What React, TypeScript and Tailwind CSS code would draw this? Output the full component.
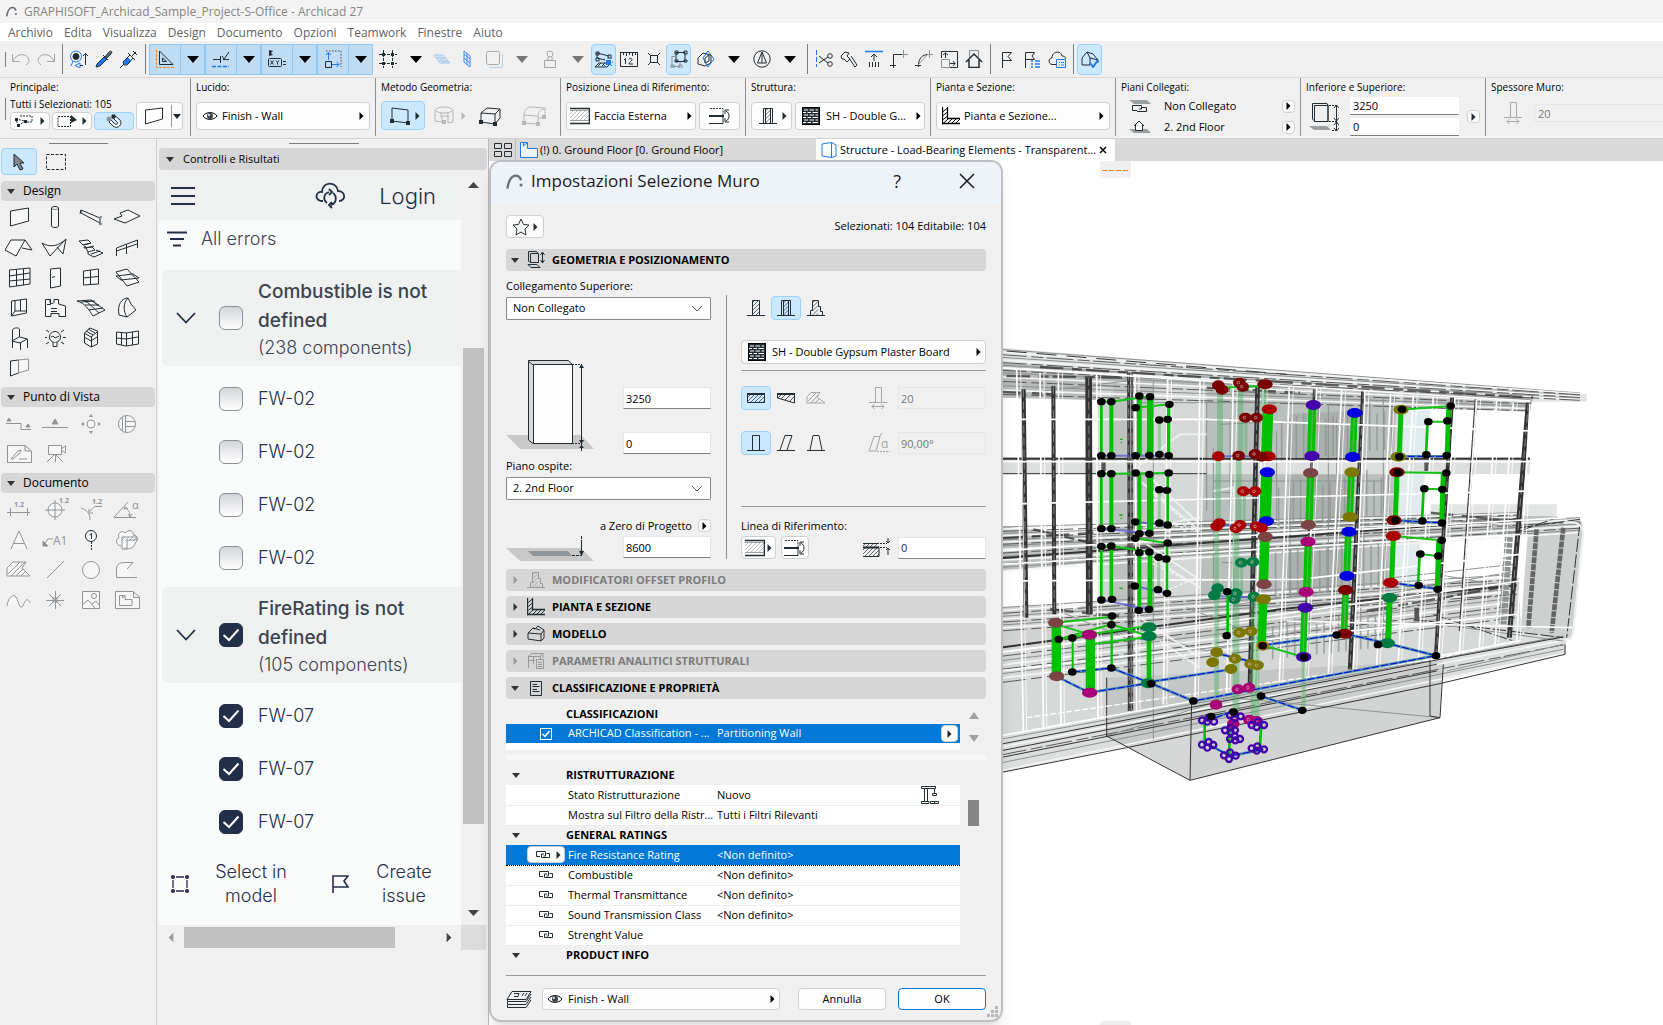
import React from 'react';
import clsx from 'clsx';

type Kids = { children?: React.ReactNode; className?: string };

type IconProps = Kids & { w?: number; h?: number; box?: string };

const Icon = ({ w = 18, h = 18, box, className, children }: IconProps) => (
    <svg
        width={w}
        height={h}
        viewBox={box || `0 0 ${w} ${h}`}
        fill="none"
        stroke="currentColor"
        strokeWidth="1"
        className={clsx('shrink-0', className)}
        aria-hidden="true"
    >
        {children}
    </svg>
);

const BLUE = '#1f78f0';

const Right = ({ className }: { className?: string }) => (
    <svg width="5" height="8" viewBox="0 0 5 8" className={clsx('shrink-0', className)} aria-hidden="true">
        <path d="M0.500 0 4.500 4 0.500 8Z" fill="currentColor" />
    </svg>
);

const Down = ({ className, big }: { className?: string; big?: boolean }) => (
    <svg width={big ? 12 : 8} height={big ? 7 : 5} viewBox="0 0 8 5" preserveAspectRatio="none" className={clsx('shrink-0', className)} aria-hidden="true">
        <path d="M0 0H8L4 5Z" fill="currentColor" />
    </svg>
);

const Hatch = ({ x, y, w, h }: { x: number; y: number; w: number; h: number }) => {
    const lines = [];
    for (let i = 3; i < w + h; i += 4) {
        const x1 = Math.max(0, i - h);
        const y1 = Math.min(h, i);
        const x2 = Math.min(w, i);
        const y2 = Math.max(0, i - w);
        lines.push(`M${x + x1} ${y + y1}L${x + x2} ${y + y2}`);
    }
    return <path d={lines.join('')} strokeWidth="0.7" />;
};

/* ---------- shared icons ---------- */

const Logo = ({ size = 16 }: { size?: number }) => (
    <Icon w={size} h={size} box="0 0 16 16" className="text-[#6a7078]">
        <path d="M2 14C3 8 5 3 9 3c3 0 4 2 4.500 4" strokeWidth="2" />
        <circle cx="13.500" cy="11" r="1.300" fill="currentColor" stroke="none" />
    </Icon>
);

const Eye = () => (
    <Icon w={16} h={12}>
        <path d="M1 6C4 1.500 12 1.500 15 6 12 10.500 4 10.500 1 6Z" />
        <circle cx="8" cy="6" r="3" fill="#3b444a" stroke="none" />
        <circle cx="7" cy="5" r="1" fill="#fff" stroke="none" />
    </Icon>
);

const WallFace = () => (
    <Icon w={20} h={18} className="text-[#9a9fa2]">
        <Hatch x={0} y={4} w={20} h={9} />
        <path d="M0 1.500H19.500V16.500H0" stroke="#222c33" strokeWidth="1.500" />
        <path d="M0 3.500H19M0 13.500H19" />
    </Icon>
);

const FlipSide = () => (
    <Icon w={22} h={18}>
        <path d="M1 1.500H14V8" strokeDasharray="2 1" />
        <path d="M0 9H15" strokeWidth="2" />
        <path d="M0 16.500H14V10" />
        <path d="M17 4C21 6 21 12 17 14M16 7V3H20M16 11V15H20" />
    </Icon>
);

const Brick = () => (
    <Icon w={18} h={18}>
        <rect x="0.500" y="0.500" width="17" height="17" fill="#222c33" />
        <path
            d="M2 3H6M7.500 3H12M13.500 3H16M1 5.500H4M5.500 5.500H9M10.500 5.500H16M2 8H6M7.500 8H12M13.500 8H16M1 10.500H4M5.500 10.500H9M10.500 10.500H16M2 13H6M7.500 13H12M13.500 13H16M1 15.500H4M5.500 15.500H9M10.500 15.500H16"
            stroke="#fff"
            strokeWidth="1.200"
        />
    </Icon>
);

const Basic = () => (
    <Icon>
        <Hatch x={5} y={1} w={7} h={15} />
        <path d="M5.500 16.500V1.500H12.500V16.500M0 16.500H18" />
    </Icon>
);

const Composite = () => (
    <Icon>
        <Hatch x={6.500} y={1} w={5} h={15} />
        <path d="M4.500 16.500V1.500H13.500V16.500M6.500 1V16M11.500 1V16M0 16.500H18" />
    </Icon>
);

const Profile = ({ className }: { className?: string }) => (
    <Icon className={className}>
        <Hatch x={5.500} y={1} w={5.500} h={15} />
        <path d="M3.500 16.500V11.500H5.500V1.500H11.500V7.500H13.500V12.500H15.500V16.500M0 16.500H18" />
    </Icon>
);

const Thickness = () => (
    <Icon w={18} h={22} className="text-[#a3a7aa]">
        <path d="M0 15.500H18M6.500 15.500V0.500H12.500V15.500M3 19.500H15M5.500 17 3 19.500 5.500 22M12.500 17 15 19.500 12.500 22" />
    </Icon>
);

const SectionL = () => (
    <Icon>
        <path d="M0.500 0V16.500H18M5.500 0V11.500H18" strokeWidth="1.300" />
        <path d="M0.500 5 5.500 1M0.500 9 5.500 5M0.500 13 5.500 9M0.500 17 6 12M5 17 10 12M9 17 14 12M13 17 18 12" />
    </Icon>
);

const Link = () => (
    <Icon w={14} h={8}>
        <path d="M4 5.500H0.500V0.500H9.500V5H7.500M10.500 2.500H13.500V6.500H5.500V3H8" />
    </Icon>
);

const QuadWall = ({ dots }: { dots?: boolean }) => (
    <Icon w={20} h={18}>
        <path d="M1.500 3 18.500 1V12L1.500 17Z" fill="#fff" />
        {dots && <path d="M0 14H4V18H0ZM16 11H20V15H16Z" fill="currentColor" stroke="none" />}
    </Icon>
);

/* ---------- standard toolbar ---------- */

const Sep = () => (
    <div className="flex h-[30px] w-2 shrink-0 justify-center">
        <div className="w-px bg-[#7d7d7d]" />
    </div>
);

type ToolProps = Kids & { label: string; on?: boolean; dim?: boolean };

const Tool = ({ label, on, dim, children }: ToolProps) => (
    <button
        aria-label={label}
        className={clsx(
            'flex h-[31px] w-[25px] shrink-0 items-center justify-center rounded-sm',
            on && 'border border-[#99d1ff] bg-[#cce8ff]',
            dim && 'text-[#a3a7aa]'
        )}
    >
        {children}
    </button>
);

const DropTool = ({ label, on, dim, children }: ToolProps) => (
    <div className={clsx('flex h-[31px] w-14 shrink-0', on && 'border border-[#8ec8f6] bg-[#c0dcf3]', dim && 'text-[#a3a7aa]')}>
        <button aria-label={label} className="flex w-[30px] items-center justify-center">
            {children}
        </button>
        <button
            aria-label={`${label} menu`}
            className={clsx('flex flex-1 items-center justify-center', dim ? 'text-[#777]' : 'text-black', on && 'border-l border-[#8ec8f6]')}
        >
            <Down big />
        </button>
    </div>
);

const Toolbar = () => (
    <div className="flex h-[37px] items-center border-b border-[#d9d9d9] text-[#222c33]">
        <div className="mr-[2px] ml-[5px] h-[15px] w-px bg-[#7d7d7d]" />
        <Tool label="Annulla azione" dim><Icon><path d="M0.500 4V11.500H8M1 11C4 4 12 3 15.500 7 18 10 17 13 14 15" /></Icon></Tool>
        <Tool label="Ripeti azione" dim><Icon><path d="M17.500 4V11.500H10M17 11C14 4 6 3 2.500 7 0 10 1 13 4 15" /></Icon></Tool>
        <Sep />
        <Tool label="Trova e seleziona">
            <Icon>
                <circle cx="6" cy="6.500" r="5.500" stroke={BLUE} />
                <circle cx="6" cy="6.500" r="3" fill="currentColor" />
                <path d="M3 11 1 16M10 13V18L5 15.500Z" stroke={BLUE} />
                <path d="M10 15.500H13M15.500 4V15M13 6 15.500 3.500 18 6" />
            </Icon>
        </Tool>
        <Tool label="Preleva parametri">
            <Icon>
                <path d="M1 17 2 14 9 7 12 9 5 16Z" fill={BLUE} />
                <path d="M8 5 13 10M10 7 14 2C16 0 18 2 16 4L12 8Z" fill="#5b656b" />
            </Icon>
        </Tool>
        <Tool label="Inietta parametri">
            <Icon>
                <path d="M0 18 4 14" />
                <path d="M4 12 8 8 11 11 8 14H4Z" fill={BLUE} stroke={BLUE} />
                <path d="M3 12 10 5 13 8 7 15H4ZM8 3 15 10M12 6 16 2M13 1 17 5" />
            </Icon>
        </Tool>
        <Sep />
        <DropTool label="Linee guida" on>
            <Icon>
                <path d="M3.500 1V14.500H17ZM6.500 8V11.500H10.500Z" />
                <path d="M0.500 0V17.500H18" stroke="#f5821f" strokeDasharray="3 1" />
            </Icon>
        </DropTool>
        <DropTool label="Aggancio" on>
            <Icon>
                <path d="M1 9.500H8M10 6 12 9 17 2M8.500 6V13M11 9.500H17" />
                <path d="M0 16.500H17" stroke={BLUE} strokeDasharray="4 1.500" strokeWidth="1.500" />
            </Icon>
        </DropTool>
        <DropTool label="Coordinate" on>
            <Icon>
                <rect x="0.500" y="8.500" width="13" height="8" rx="1" />
                <path d="M2.500 10.500 5.500 14.500M5.500 10.500 2.500 14.500M8 10.500 9.500 12.500V14.500M11 10.500 9.500 12.500M15 11.500H18M15 14.500H18" />
                <path d="M1 0 1 6 5 5 3 3 5 1Z" fill="currentColor" stroke="none" />
            </Icon>
        </DropTool>
        <DropTool label="Griglia elementi" on>
            <Icon>
                <path d="M2 1H17V17" stroke="#8b9298" strokeDasharray="1.500 1.500" strokeWidth="2" />
                <path d="M1.500 11.500H7.500V17.500H1.500Z" />
                <path d="M4.500 10V3M2 5 4.500 2.500 7 5M8 14.500H15M12.500 12 15 14.500 12.500 17" stroke={BLUE} />
            </Icon>
        </DropTool>
        <DropTool label="Griglia">
            <Icon>
                <path d="M4.500 0V18M13.500 0V18M0 4.500H18M0 13.500H18" strokeDasharray="3 1" />
                <path d="M3 3H6V6H3ZM12 3H15V6H12ZM3 12H6V15H3ZM12 12H15V15H12Z" fill="currentColor" stroke="none" />
            </Icon>
        </DropTool>
        <Tool label="Piano di lavoro" dim>
            <Icon className="text-[#9fc3ee]"><path d="M1 5H10L17 13H7ZM4 5 11 13M7 5 14 13M3 8H12M5 11H15" /></Icon>
        </Tool>
        <Tool label="Piano verticale">
            <Icon className="text-[#3f86e8]"><path d="M6 1 12 6V17L6 12ZM9 3V15M6 4 12 9M6 8 12 13" /></Icon>
        </Tool>
        <DropTool label="Lucidi" dim>
            <Icon>
                <path d="M4.500 17.500H15C17 17.500 17.500 17 17.500 15V4" stroke="#b5cdec" />
                <rect x="1.500" y="1.500" width="13" height="13" rx="2" />
            </Icon>
        </DropTool>
        <DropTool label="Gravità" dim>
            <Icon><path d="M3.500 10.500H14.500V17.500H3.500ZM7 10V7M11 10V7" /><circle cx="9" cy="4" r="3" /></Icon>
        </DropTool>
        <Tool label="Sospendi gruppi" on>
            <Icon>
                <path d="M2 3 14 6M2 3V8L10 10M1 2H4V5H1ZM13 5H16V8H13ZM1 8H4V11H1Z" />
                <path d="M0 17H12L16 13H4ZM3 16 6 13M7 16 10 13" />
                <path d="M11 10H16V15H11Z" fill={BLUE} stroke="none" />
                <path d="M9 9H10M13 8V9M17 8 16 9M18 12H17M9 16 10 15M17 16 16 15" stroke={BLUE} />
            </Icon>
        </Tool>
        <Tool label="Misura">
            <Icon>
                <path d="M0.500 2V16.500H17.500V2M3.500 2V5M6.500 2V6M9.500 2V5M12.500 2V6M15.500 2V5M0 2.500H18" />
                <path d="M4 10 5.500 8.500V14M9 9.500C9 8 12 8 12 9.500 12 11 9 12 9 14H13" />
            </Icon>
        </Tool>
        <Tool label="Esplodi"><Icon><path d="M5.500 5.500H12.500V12.500H5.500ZM3 3 6 6M15 3 12 6M3 15 6 12M15 15 12 12" /></Icon></Tool>
        <Tool label="Gruppo automatico" on>
            <Icon>
                <path d="M6 2.500H15V11.500H6ZM5 1H8V4H5ZM14 1H17V4H14ZM5 10H8V12H5ZM14 10H17V12H14Z" />
                <path d="M2 6.500H6M2 6V16.500H10V12M1 15H4V18H1ZM9 15H12V18H9Z" stroke="#8b9298" />
            </Icon>
        </Tool>
        <DropTool label="Modello 3D">
            <Icon>
                <path d="M1 8 6 3 14 5V13L8 16 1 14Z" />
                <path d="M6 8 11 1 17 9 11 17Z" stroke={BLUE} />
                <path d="M8 8 12 5V11L8 13Z" />
            </Icon>
        </DropTool>
        <DropTool label="Mostra riferimento">
            <Icon><circle cx="9" cy="9" r="8.200" /><path d="M9 2 13.500 13H4.500ZM9 2V13" /></Icon>
        </DropTool>
        <Sep />
        <Tool label="Dividi">
            <Icon>
                <path d="M1.500 0V17" stroke={BLUE} strokeDasharray="5 2" />
                <path d="M4 6 13 13M4 13 13 7" />
                <circle cx="15" cy="6" r="2.300" /><circle cx="15" cy="14" r="2.300" />
            </Icon>
        </Tool>
        <Tool label="Regola"><Icon><path d="M1 6 5 2 9 3 7 6 10 9 7 12 4 9 2 9ZM9 8 15 17M11 6 17 15 15 17" /></Icon></Tool>
        <Tool label="Allinea">
            <Icon>
                <path d="M0 1.500H18" stroke={BLUE} strokeWidth="1.500" />
                <path d="M9 11V4M6 7 9 4 12 7M4.500 12V17M7.500 12V17M10.500 12V17M13.500 12V17" />
            </Icon>
        </Tool>
        <Tool label="Intersezione"><Icon><path d="M3.500 18V4.500H12M0 15.500H6" /><path d="M12 4.500H18M13.500 0V8" stroke="#8b9298" /></Icon></Tool>
        <Tool label="Raccordo"><Icon><path d="M3.500 17C3 9 7 4.500 13 4.500M0 15.500H6" /><path d="M13 4.500H18M14.500 0V8M3 15 13 4" stroke="#8b9298" /></Icon></Tool>
        <Tool label="Ridimensiona">
            <Icon><path d="M1.500 8V1.500H17.500V17.500H10M5.500 8V3M3 5 5.500 3 8 5M10 13.500H15M13 11 15 13.500 13 16" /><path d="M1.500 9.500H9.500V17.500H1.500Z" stroke="#8b9298" /></Icon>
        </Tool>
        <Tool label="Ritaglia al tetto"><Icon><path d="M4.500 7V0.500H13.500V7" stroke="#8b9298" /><path d="M1 12 9 4 17 12M4 10V17.500H14V10" strokeWidth="1.500" /></Icon></Tool>
        <Sep />
        <Tool label="Problema"><Icon><path d="M4.500 18V2.500H13.500L10 6.500 13.500 10.500H4" /></Icon></Tool>
        <Tool label="Elenco problemi">
            <Icon><path d="M2.500 18V2.500H11.500L9 6 11.500 9.500H2" /><path d="M8 11H10M12 11H17M8 14H10M12 14H17M8 17H10M12 17H17" stroke={BLUE} strokeWidth="1.500" /></Icon>
        </Tool>
        <Tool label="Servizio cloud">
            <Icon>
                <path d="M8 14.500H4C0 14 0 8 4 8 4 1 13 0 14 6 17 6 18 8 17 9" />
                <path d="M8.500 9.500H17.500V17.500H8.500ZM11 12.500H12M13 12.500H16M11 15H12M13 15H16" stroke={BLUE} />
            </Icon>
        </Tool>
        <Sep />
        <Tool label="Controllo modello" on>
            <Icon>
                <path d="M1 8 6 2 12 4 17 10V13M6 2 9 8 17 10M1 8V15H9V8" />
                <path d="M9 13 12 17 17 10" stroke={BLUE} strokeWidth="2" />
            </Icon>
        </Tool>
    </div>
);

/* ---------- info box ---------- */

const InfoCell = ({ label, children, className }: Kids & { label: string }) => (
    <section className={clsx('h-[58px] shrink-0 border-r border-[#8f8f8f] px-[5px] pt-[2px]', className || 'w-[185px]')}>
        <h3 className="text-[10px] leading-[14px]">{label}</h3>
        {children}
    </section>
);

const WhiteButton = ({ children, className, label }: Kids & { label?: string }) => (
    <button aria-label={label} className={clsx('flex items-center rounded border border-[#cfcfcf] bg-[#fdfdfd]', className)}>
        {children}
    </button>
);

const MiniArrow = ({ label }: { label: string }) => (
    <WhiteButton label={label} className="h-[13px] w-[13px] shrink-0 justify-center"><Right /></WhiteButton>
);

const InfoBox = () => (
    <div className="flex h-[61px] items-start overflow-hidden border-b border-[#d0d0d0] text-black">
        <section className="relative h-[58px] w-[191px] shrink-0 border-r border-[#8f8f8f] pt-[2px] pl-[10px]">
            <div className="absolute top-5 left-[5px] h-[22px] w-px bg-[#7d7d7d]" />
            <h3 className="text-[10px] leading-[14px]">Principale:</h3>
            <div className="flex items-end gap-[2px]">
                <div>
                    <p className="pt-[3px] text-[10px] leading-[14px]">Tutti i Selezionati: 105</p>
                    <div className="flex gap-[2px] pt-px text-[#222c33]">
                        <WhiteButton label="Selezione wall" className="h-[18px] w-10 justify-between px-1">
                            <Icon w={18} h={12}><path d="M1 4 10 6 3 11ZM5 1H17V7H9" strokeDasharray="2 1" /><path d="M0 3H3V6H0ZM2 9H5V12H2ZM9 5H12V8H9Z" fill="currentColor" stroke="none" /></Icon>
                            <Right />
                        </WhiteButton>
                        <WhiteButton label="Area di selezione" className="h-[18px] w-10 justify-between px-1">
                            <Icon w={20} h={12}><path d="M1 1.500H13.500V11.500H1Z" strokeDasharray="2 1" /><path d="M14 0V8L20 5Z" fill="currentColor" stroke="none" /></Icon>
                            <Right />
                        </WhiteButton>
                        <button aria-label="Magnete" className="flex h-[18px] w-10 items-center justify-center rounded border border-[#99d1ff] bg-[#cce8ff]">
                            <Icon w={17} h={16}><path d="M8 2 14 7C17 11 12 17 7 13L3 9 5 7 9 11C11 12 13 10 11 9L6 4Z" fill="#fff" /><circle cx="3" cy="6" r="2.500" fill="#8b9298" stroke="none" /><path d="M6 2H9V5H6Z" fill="currentColor" /></Icon>
                        </button>
                    </div>
                </div>
                <div className="flex h-7 w-[47px] rounded border border-[#cfcfcf] bg-[#fdfdfd] text-[#222c33]">
                    <button aria-label="Strumento Muro" className="flex flex-1 items-center justify-center"><QuadWall /></button>
                    <button aria-label="Menu Muro" className="my-[2px] flex w-[11px] items-center justify-center border-l border-[#9a9a9a]"><Down /></button>
                </div>
            </div>
        </section>
        <InfoCell label="Lucido:">
            <WhiteButton className="mt-2 h-7 w-full gap-1 px-[5px] text-[11px]">
                <Eye /> <span className="flex-1 text-left">Finish - Wall</span> <Right />
            </WhiteButton>
        </InfoCell>
        <InfoCell label="Metodo Geometria:">
            <div className="mt-[7px] flex items-center gap-[9px] text-[#222c33]">
                <button aria-label="Muro rettilineo" className="flex h-[29px] w-11 shrink-0 items-center justify-between rounded border border-[#99d1ff] bg-[#cce8ff] px-1 pl-2">
                    <Icon w={20} h={20}><path d="M2 2 18 4V17L2 15Z" /><path d="M0 13H4V17H0ZM16 15H20V19H16Z" fill="currentColor" stroke="none" /></Icon>
                    <Right />
                </button>
                <button aria-label="Muro curvo" className="flex items-center gap-[7px] text-[#b4b8ba]">
                    <Icon w={20} h={20}><path d="M1 4C4 0 16 0 19 4V16L14 17V10H8V16L1 15ZM1 4C3 8 17 8 19 4M7 7V12M14 7V12" /><path d="M8 14H12V18H8Z" fill="currentColor" stroke="none" /></Icon>
                    <Right />
                </button>
                <button aria-label="Muro trapezoidale" className="ml-1">
                    <Icon w={22} h={20}><path d="M2 7 8 2 21 3V12L16 18 2 16ZM2 7 16 8V18M16 8 21 3" /><path d="M0 14H4V18H0ZM14 16H18V20H14Z" fill="currentColor" stroke="none" /></Icon>
                </button>
                <button aria-label="Poligono" className="ml-3 text-[#b4b8ba]">
                    <Icon w={24} h={20}><path d="M2 9C2 4 5 1 10 1L23 2V11M2 9 15 10M2 9V17L16 18V10C16 6 19 3 22 3M16 12H22" /><path d="M0 15H4V19H0ZM14 16H18V20H14ZM20 9H24V13H20Z" fill="currentColor" stroke="none" /></Icon>
                </button>
            </div>
        </InfoCell>
        <InfoCell label="Posizione Linea di Riferimento:">
            <div className="mt-2 flex gap-[3px] text-[#222c33]">
                <WhiteButton className="h-7 w-[130px] gap-1 px-[3px] text-[11px] text-black">
                    <WallFace /> <span className="flex-1 text-left">Faccia Esterna</span> <Right />
                </WhiteButton>
                <WhiteButton label="Capovolgi" className="h-7 w-[41px] justify-center"><FlipSide /></WhiteButton>
            </div>
        </InfoCell>
        <InfoCell label="Struttura:">
            <div className="mt-2 flex gap-[3px] text-[#222c33]">
                <WhiteButton label="Composto" className="h-7 w-[41px] justify-between pr-1 pl-[7px]"><Composite /> <Right /></WhiteButton>
                <WhiteButton className="h-7 w-[130px] gap-[6px] pr-[3px] pl-[6px] text-[11px] text-black">
                    <Brick /> <span className="flex-1 text-left whitespace-nowrap">SH - Double G...</span> <Right />
                </WhiteButton>
            </div>
        </InfoCell>
        <InfoCell label="Pianta e Sezione:">
            <WhiteButton className="mt-2 h-7 w-full gap-1 px-[5px] text-[11px]">
                <SectionL /> <span className="flex-1 text-left">Pianta e Sezione...</span> <Right />
            </WhiteButton>
        </InfoCell>
        <InfoCell label="Piani Collegati:">
            <div className="space-y-[3px] pt-[3px] pl-2 text-[11px] text-black">
                <div className="flex h-[18px] items-center">
                    <Icon w={22} h={12} className="text-[#222c33]"><path d="M0 0H18L22 4H5Z" fill="#9a9fa2" stroke="none" /><path d="M8 10.500H3.500V5.500H12.500V9H10M13 7.500H17.500V11.500H8" /></Icon>
                    <span className="flex-1 pl-[13px]">Non Collegato</span>
                    <MiniArrow label="Piano superiore" />
                </div>
                <div className="flex h-[18px] items-center">
                    <Icon w={22} h={14} className="text-[#222c33]"><path d="M0 9H18L22 13H5Z" fill="#9a9fa2" stroke="none" /><path d="M5 6 10 1 15 6M6.500 5V10.500H13.500V5" fill="#fff" /></Icon>
                    <span className="flex-1 pl-[13px]">2. 2nd Floor</span>
                    <MiniArrow label="Piano di base" />
                </div>
            </div>
        </InfoCell>
        <InfoCell label="Inferiore e Superiore:">
            <div className="flex items-center gap-[8px] pt-[3px] pl-[3px] text-[#222c33]">
                <Icon w={30} h={32} className="mr-[3px]">
                    <path d="M0 25H18L22 29H5Z" fill="#9a9fa2" stroke="none" />
                    <path d="M3.500 2.500H18L19 4.500V20.500H6L3.500 18ZM5.500 4.500H19V20.500H5.500Z" />
                    <path d="M20 4.500H29M20 20.500H29M23 29.500H29" strokeDasharray="2 1" />
                    <path d="M27.500 5V29M25 7 27.500 4 30 7M25 17 27.500 20 30 17M25 24 27.500 21 30 24M25 27 27.500 30 30 27" />
                </Icon>
                <div className="flex w-[110px] flex-col gap-[3px] text-[11px] text-black">
                    <input aria-label="Altezza" defaultValue="3250" className="h-[18px] w-full border-b border-[#808080] bg-white px-[3px]" />
                    <input aria-label="Quota base" defaultValue="0" className="h-[18px] w-full border-b border-[#808080] bg-white px-[3px]" />
                </div>
                <MiniArrow label="Opzioni altezza" />
            </div>
        </InfoCell>
        <div className="min-w-0 flex-1 pt-[2px] pl-[5px]">
            <h3 className="text-[10px] leading-[14px] whitespace-nowrap">Spessore Muro:</h3>
            <div className="flex items-center gap-[12px] pt-2 pl-[13px]">
                <Thickness />
                <input aria-label="Spessore" defaultValue="20" disabled className="h-[18px] w-[140px] border border-[#e6e6e6] bg-[#f0f0f0] px-[3px] text-[11px] text-[#777]" />
            </div>
        </div>
    </div>
);

/* ---------- toolbox ---------- */

const designTools: [string, React.ReactNode][] = [
    ['Muro', <path d="M5.500 7 23.500 4V17L5.500 22Z" />],
    ['Pilastro', <><ellipse cx="14" cy="4" rx="3.500" ry="1.500" /><path d="M10.500 4V22C11 24 17 24 17.500 22V4" /></>],
    ['Trave', <path d="M4 6V9L23 19V14L4 6L3 10M23 13H25M22 20H25" />],
    ['Solaio', <path d="M1 15 9 12 7 9 15 6 27 12 12 19Z" />],
    ['Falda', <path d="M0 16 6 6H20L11 22ZM20 6 27 16 17 14" />],
    ['Guscio', <path d="M1 9C9 14 18 12 25 5L22 20 16 13M1 9 9 22 25 5" />],
    ['Scala', <path d="M2 7 11 6 14 9 6 11ZM6 11 14 9M8 12 7 14 15 13 18 16 11 18ZM11 18V20L17 23 26 19 19 16M9 14 17 12M14 20 23 17" />],
    ['Ringhiera', <path d="M3.500 22V14L24.500 6V14M3.500 17 24 10M13.500 10V20" />],
    ['Facciata continua', <path d="M4.500 6 25 4V20L4.500 23ZM11.500 5.500V22M18.500 5V21M4 12 25 9M4 17 25 15" />],
    ['Porta', <path d="M9.500 5 19.500 4V22L9.500 24ZM11 13.500 14 12.500" />],
    ['Finestra', <path d="M6.500 7 21.500 5V20L6.500 21ZM13.500 6V20.500M6 14 21 12.500" />],
    ['Lucernario', <path d="M3 8 14 5 26 18 14 22ZM3 12 20 10 26 14 8 16Z" />],
    ['Apertura', <path d="M6.500 7 21.500 5V19L6.500 22ZM6.500 22 10 17H21M10 17V7M15.500 6V17" />],
    ['Zona', <path d="M4.500 5.500H9V8C9 10 13 10 13 8V5.500H17.500V10L24.500 12V22.500H18V19.500H10V22.500H4.500ZM10 14.500H16M10 17.500H16M9.500 5V10.500H6" />],
    ['Mesh', <path d="M0 7 14 6 28 16 16 22C12 16 8 9 0 7ZM7 7C12 8 16 14 22 19M14 6 22 12M4 8 18 7M8 11 22 11M12 16 26 14" />],
    ['Morph', <path d="M6 21C4 10 9 4 15 4L18 10 23 16 14 23ZM15 4C10 9 10 17 14 23" />],
    ['Oggetto', <path d="M7.500 24V6C8 4 13 3 14.500 5V13L22.500 15V24M7 17 14 13M7 17 15 19 22 15M15.500 19V26" />],
    ['Lampada', <><circle cx="14" cy="13" r="5.500" /><path d="M12 18V22.500H16V18M10 13 12 12 14 14 18 12M4 13.500H6M22 13.500H25M5 6 8 8M23 6 20 8M5 20 8 18M23 20 20 18" /></>],
    ['Impianto', <path d="M7.500 9 13 4 20.500 7V20L14 23 7.500 19ZM7 9 14 13 20 8M14.500 13V23M9 7 16 11M11 5 18 9M7 13 14 17 20 13" />],
    ['Parete strutturata', <path d="M3.500 8 13 9 25.500 7V20L13 22 3.500 20ZM8.500 8V21M13.500 9V22M19.500 8V21M3 14 13 15 25 13" />],
    ['Divisorio', <><path d="M5.500 7 13.500 6V19L5.500 22Z" /><path d="M13 6 23.500 5V16L13 19" stroke="#8b9298" /></>],
];

const viewTools: [string, React.ReactNode][] = [
    ['Sezione', <><path d="M1 13.500H16V19.500H26" /><path d="M2 11 4 8 6 11ZM21 17 23 14 25 17Z" fill="currentColor" /></>],
    ['Alzato', <><path d="M1 17.500H27" /><path d="M11 14 14 9 17 14Z" fill="currentColor" /></>],
    ['Alzato interno', <><circle cx="14" cy="14" r="4" /><path d="M12 7H16L14 4ZM12 21H16L14 24ZM7 12V16L4 14ZM21 12V16L24 14Z" fill="currentColor" stroke="none" /></>],
    ['Dettaglio', <><circle cx="14" cy="14" r="8.500" /><path d="M9.500 7V21M12.500 6V22M13 11.500H22M13 16.500H22" /></>],
    ['Foglio di lavoro', <path d="M2.500 5.500H20L26.500 11V22.500H2.500ZM20 5.500V11H26M6 19 13 11 16 10 15 13 8 19ZM14 19H22" />],
    ['Camera', <path d="M7.500 5.500H20.500V14.500H7.500ZM20 9 24.500 6V13L20 10M14.500 14V22M14 14 6 22M14 14 22 22" />],
];

const docTools: [string, React.ReactNode][] = [
    ['Quota lineare', <><path d="M2 16.500H25M5.500 12V20M22.500 12V20" /><text x="9" y="11" className="fill-current stroke-none text-[7px] font-bold">1.2</text></>],
    ['Quota altimetrica', <><circle cx="14" cy="14" r="7" /><path d="M4 14H24M14 4V24" /><text x="18" y="7" className="fill-current stroke-none text-[7px] font-bold">1.2</text></>],
    ['Quota radiale', <><path d="M4 12C10 14 13 18 13 24M12 16 18 10.500H25M12 13V17H16" /><text x="15" y="8" className="fill-current stroke-none text-[7px] font-bold">1.2</text></>],
    ['Quota angolare', <><path d="M1 21.500H23M1 21 15 6M12 12C16 14 17 17 17 20M11 14 12 11 15 13M15 18 17 21 19 18" /><text x="19" y="13" className="fill-current stroke-none text-[11px]">α</text></>],
    ['Testo', <path d="M6 23 14 5 22 23M9 17.500H19" />],
    ['Etichetta', <><path d="M2 20 7 13H12" /><path d="M2 15V20H7Z" fill="currentColor" /><text x="12" y="19" className="fill-current stroke-none text-[12px]">A1</text></>],
    ['Asse griglia', <g stroke="#222c33"><circle cx="14" cy="10" r="5.500" /><path d="M14.500 16V25" strokeDasharray="2 1" /><path d="M12.500 9 14.500 7.500V13" /></g>],
    ['Modifica', <><path d="M8 20C2 19 3 12 6 12 4 6 10 4 12 7 16 2 22 6 20 9 26 9 25 16 22 17 22 22 14 25 11 21" /><path d="M9 11H24V14H14V23H9Z" /><Hatch x={9} y={11} w={14} h={4} /></>],
    ['Retino', <><path d="M2 12 8 6H21L17 12 25 20H2Z" /><path d="M3 18 15 6M6 20 20 6M11 20 18 13M16 20 20 16" /></>],
    ['Linea', <path d="M6 22 23 5" />],
    ['Cerchio', <circle cx="14" cy="14" r="8.500" />],
    ['Polilinea', <path d="M24 21.500H3.500V12C5 6 8 6.500 20 6.500L14 13" />],
    ['Spline', <path d="M2 20C3 12 8 7 11 11 15 17 13 23 18 20 20 14 23 11 25 17" />],
    ['Punto caldo', <path d="M14.500 5V23M5 14.500H23M8 8 20 20M20 8 8 20M12 12H16V16H12Z" />],
    ['Figura', <><path d="M5.500 5.500H22.500V22.500H5.500ZM5 19 11 14 18 22M15 18 19 15 22 19" /><circle cx="17" cy="10" r="2.500" /></>],
    ['Disegno', <path d="M2.500 5.500H20L26.500 11V22.500H2.500ZM20.500 6V11.500H26M6.500 9.500H12V13.500H19V19.500H6.500ZM9.500 9V12L12 9.500" />],
];

const Palette = ({ title, tools, dim }: { title: string; tools: [string, React.ReactNode][]; dim?: boolean }) => (
    <section>
        <h2 className="mx-px flex h-5 items-center gap-2 rounded-sm bg-[#d6d6d6] pl-[6px] text-[12px] text-black">
            <Down className="text-[#333]" /> {title}
        </h2>
        <div className={clsx('grid grid-cols-[repeat(4,36px)] pt-[2px] pb-1 pl-px', dim ? 'text-[#8f9498]' : 'text-[#222c33]')}>
            {tools.map(([name, art]) => (
                <button key={name} aria-label={name} className="flex h-[30px] items-center justify-center">
                    <Icon w={28} h={28} className="fill-white/40">{art}</Icon>
                </button>
            ))}
        </div>
    </section>
);

const Toolbox = () => (
    <aside className="w-[157px] shrink-0 border-r border-[#d0d0d0] pt-1">
        <div className="mx-auto h-px w-[59px] bg-[#7d7d7d]" />
        <div className="flex gap-[9px] pt-1 pb-[6px] pl-px">
            <button aria-label="Freccia" className="flex h-[27px] w-9 items-center justify-center rounded-sm border border-[#99d1ff] bg-[#cce8ff]">
                <Icon w={14} h={18} className="text-[#222c33]"><path d="M2 1V14L5 11 8 17 11 16 8 10H12Z" fill="#80868b" /></Icon>
            </button>
            <button aria-label="Area di selezione">
                <Icon w={20} h={16} className="text-[#222c33]"><path d="M0.500 0.500H19.500V15.500H0.500Z" strokeDasharray="3 1.500" /></Icon>
            </button>
        </div>
        <Palette title="Design" tools={designTools} />
        <Palette title="Punto di Vista" tools={viewTools} dim />
        <Palette title="Documento" tools={docTools} dim />
    </aside>
);

/* ---------- check results ---------- */

const Check = ({ checked, label, children }: Kids & { checked?: boolean; label?: string }) => (
    <label className="flex items-center gap-[15px]">
        <span className="grid h-6 w-6 shrink-0">
            <input
                type="checkbox"
                defaultChecked={checked}
                aria-label={label}
                className="peer col-start-1 row-start-1 h-6 w-6 appearance-none rounded-md border border-[#8b8f97] bg-linear-to-b from-[#d3d5da] to-white checked:border-[#232e49] checked:bg-[#232e49] checked:bg-none"
            />
            <svg viewBox="0 0 24 24" className="pointer-events-none invisible col-start-1 row-start-1 h-6 w-6 peer-checked:visible" fill="none" stroke="#fff" strokeWidth="2" aria-hidden="true">
                <path d="M4.500 12 10 17 19.500 6.500" />
            </svg>
        </span>
        {children}
    </label>
);

type ErrorGroup = { title: string; count: number; item: string; rows: number; checked: boolean };

const groups: ErrorGroup[] = [
    { title: 'Combustible is not defined', count: 238, item: 'FW-02', rows: 4, checked: false },
    { title: 'FireRating is not defined', count: 105, item: 'FW-07', rows: 3, checked: true },
];

const ResultGroup = ({ group }: { group: ErrorGroup }) => (
    <section>
        <div className="ml-[3px] flex h-24 items-center rounded-l-md bg-[#eff1f1]">
            <button aria-label="Comprimi" className="mr-[23px] ml-[14px]">
                <Icon w={20} h={12}><path d="M1 1 10 10.500 19 1" strokeWidth="1.800" /></Icon>
            </button>
            <Check checked={group.checked}>
                <span className="w-[190px] pt-px text-[#3b4350]">
                    <span className="block text-[19px] leading-[29px] font-medium">{group.title}</span>
                    <span className="block text-[18px] leading-[26px] font-light">({group.count} components)</span>
                </span>
            </Check>
        </div>
        <ul className="pt-[6px] pb-[3px]">
            {Array.from({ length: group.rows }, (_, i) => (
                <li key={i} className="flex h-[53px] items-center pl-[60px]">
                    <Check checked={group.checked}><span className="text-[18px] font-light">{group.item}</span></Check>
                </li>
            ))}
        </ul>
    </section>
);

const Results = () => (
    <aside className="w-[332px] shrink-0 border-r border-[#b9b9b9] pt-1 pl-[2px]">
        <div className="mx-auto h-px w-[70px] bg-[#7d7d7d]" />
        <h2 className="mt-1 mr-px flex h-[22px] items-center gap-[9px] rounded-sm bg-[#d6d6d6] pl-[7px] text-[11px] text-black">
            <Down className="text-[#333]" /> Controlli e Risultati
        </h2>
        <div className="grid grid-cols-[302px_25px] font-[Inter,sans-serif] text-[#232e49]">
            <div className="bg-[#f9fbfa]">
                <header className="flex h-[50px] items-center bg-[#eff1f1] pt-[2px] pr-[25px] pl-3">
                    <button aria-label="Menu"><Icon w={24} h={18}><path d="M0 1H24M0 9H24M0 17H24" strokeWidth="2" /></Icon></button>
                    <button aria-label="Sincronizza" className="mr-[34px] ml-auto">
                        <Icon w={30} h={28}>
                            <path d="M8 19H6C-1 17 1 9 7 10 7 -1 22 -1 23 9 31 9 31 19 24 19" strokeWidth="1.800" />
                            <path d="M12 21C8 18 8 12 14 10M14 7 17 10 14 13M18 11C22 14 22 21 16 23M17 20 14 23 17 26" strokeWidth="1.800" />
                        </Icon>
                    </button>
                    <a href="#login" className="text-[22px] font-light">Login</a>
                </header>
                <button className="flex h-[37px] items-center gap-[14px] pl-2 text-[18px] font-light text-[#3b4350]">
                    <Icon w={20} h={16}><path d="M0 1.500H20M3 8H17M6 14.500H14" strokeWidth="2" stroke="#232e49" /></Icon>
                    All errors
                </button>
                <div className="pt-[13px]">
                    {groups.map((group) => <ResultGroup key={group.title} group={group} />)}
                </div>
                <footer className="flex h-[74px] items-center pb-2 pl-3 text-center text-[18px] leading-6 font-light">
                    <button className="flex items-center gap-[22px]">
                        <Icon w={18} h={18}><path d="M2 2H16V16H2Z" strokeDasharray="8 6" strokeDashoffset="-3" strokeWidth="1.300" /><circle cx="2" cy="2" r="2" fill="currentColor" stroke="none" /><circle cx="16" cy="2" r="2" fill="currentColor" stroke="none" /><circle cx="2" cy="16" r="2" fill="currentColor" stroke="none" /><circle cx="16" cy="16" r="2" fill="currentColor" stroke="none" /></Icon>
                        <span className="w-20">Select in model</span>
                    </button>
                    <button className="ml-10 flex items-center gap-6">
                        <Icon w={18} h={20}><path d="M2 19V2H17L13 7 17 13H2" strokeWidth="1.600" /></Icon>
                        <span className="w-[62px]">Create issue</span>
                    </button>
                </footer>
            </div>
            <div className="flex flex-col items-center bg-[#f0f0f0] py-[9px] text-[#444]">
                <Down className="mt-[3px] h-[6px] w-[11px] rotate-180" />
                <div className="mt-[160px] h-[476px] w-[21px] bg-[#c1c1c1]" />
                <Down className="mt-auto h-[6px] w-[11px]" />
            </div>
            <div className="flex h-[25px] items-center bg-[#f0f0f0] px-[9px] text-[#444]">
                <Right className="h-[11px] w-[6px] rotate-180 text-[#9b9b9b]" />
                <div className="ml-[10px] h-[21px] w-[211px] bg-[#c1c1c1]" />
                <Right className="ml-auto h-[11px] w-[6px]" />
            </div>
            <div className="bg-[#dcdcdc]" />
        </div>
    </aside>
);

/* ---------- 3D view ---------- */

// [x, top, bottom, width] of every selected wall edge
const edges = [
    [304, 212, 374, 8], [334, 212, 374, 12], [418, 195, 374, 14], [450, 197, 374, 18], [506, 220, 374, 10],
    [304, 428, 593, 8], [334, 428, 593, 12], [418, 428, 605, 12], [450, 430, 607, 18], [503, 426, 580, 8],
    [304, 646, 806, 8], [334, 646, 806, 11], [418, 665, 838, 12], [450, 663, 835, 15], [501, 636, 786, 8],
    [169, 875, 1036, 28], [271, 910, 1085, 28], [218, 921, 1023, 6], [335, 855, 1011, 7], [447, 890, 1056, 14],
    [804, 235, 376, 32], [800, 425, 570, 34], [795, 618, 760, 28], [790, 805, 943, 25],
    [938, 222, 375, 24], [932, 426, 582, 22], [925, 632, 782, 22], [914, 830, 978, 20],
    [1063, 246, 378, 20], [1054, 424, 558, 20], [1045, 602, 735, 20], [1037, 778, 908, 20],
    [1203, 236, 376, 15], [1191, 424, 568, 15], [1180, 615, 755, 15], [1169, 800, 937, 18],
    [1346, 225, 372, 14], [1330, 426, 575, 15], [1317, 628, 774, 16],
    [1283, 272, 370, 8], [1271, 473, 570, 8], [1259, 669, 763, 8],
    [614, 1170, 1240, 8], [784, 1180, 1255, 8], [688, 1185, 1270, 8], [683, 782, 914, 8],
];

const softEdges = [
    [660, 170, 376, 18], [722, 160, 376, 16], [792, 160, 376, 16], [655, 376, 585, 16], [716, 376, 590, 18],
    [650, 585, 1120, 14], [708, 590, 1170, 20], [765, 800, 1170, 26], [478, 267, 370, 9], [478, 476, 576, 9], [476, 680, 776, 9],
    [911, 978, 1138, 12], [738, 262, 370, 8], [733, 482, 580, 8], [725, 695, 800, 8],
];

const beams = [
    'M304 212H334L450 196M407 230 508 220M304 428H334L503 426M407 426 450 430M304 646 334 645M404 622 503 636M334 645 450 663',
    'M166 875 335 857M169 880 268 910M176 925 334 880M268 910 445 885M271 940 445 918M334 880 445 915M271 910 176 925',
    'M1203 236 1352 225M1283 272H1342M1191 424 1340 426M1271 473 1327 475M1180 615 1325 628M1259 669 1315 675M790 943 910 978M655 170 795 165',
];

const blueBeams = [
    'M304 374H506M304 593 448 607M404 573 503 583M304 806 445 835M404 765 500 787M655 376H800M650 583H790M640 795 790 800',
    'M169 1036 268 1085 450 1056 580 1110 1308 974 1165 938 1034 908 788 943M218 1023 334 1011 450 1056M783 1095 908 1138M1195 376H1345M1185 568 1330 576M1172 755 1315 774M620 1170 700 1140M625 1240 690 1275 790 1255M640 965 790 1000M455 1052 700 1014',
];

const nodes = [
    [304, 212], [334, 212], [418, 195], [450, 197], [407, 230], [508, 220], [478, 267], [503, 265], [304, 374], [334, 374], [407, 374], [448, 373], [478, 370], [506, 374],
    [304, 428], [334, 428], [407, 426], [448, 430], [506, 426], [478, 476], [501, 478], [304, 593], [334, 593], [406, 573], [418, 608], [448, 607], [478, 576], [503, 582],
    [304, 646], [334, 645], [406, 622], [418, 665], [448, 663], [503, 636], [476, 679], [499, 684], [304, 807], [336, 805], [404, 765], [416, 838], [447, 835], [474, 776], [501, 787],
    [336, 855], [334, 881], [176, 925], [217, 921], [217, 1023], [334, 1011], [453, 1058], [580, 1110], [682, 782], [680, 914], [783, 1095], [907, 1138], [634, 1156], [700, 1143],
    [1352, 225], [1285, 272], [1342, 270], [1279, 371], [1340, 373], [1339, 426], [1273, 473], [1327, 475], [1267, 570], [1326, 576], [1325, 628], [1261, 669], [1315, 675], [1256, 763], [1313, 775], [1308, 974], [1010, 912], [1134, 941],
    [1206, 235], [1198, 377], [1194, 424], [1186, 568], [788, 944], [913, 979],
];

const pads: [number, number, string][] = [
    [655, 163, '#7b0000'], [666, 176, '#7b0000'], [718, 155, '#7b0000'], [728, 167, '#7b0000'], [795, 160, '#7b0000'], [736, 260, '#7b0000'], [770, 260, '#7b0000'], [808, 235, '#aa0000'],
    [655, 376, '#aa0000'], [716, 374, '#7b0000'], [765, 369, '#7b0000'], [804, 376, '#aa0000'], [785, 377, '#7b0000'], [802, 424, '#0000e0'], [799, 571, '#0000e0'], [730, 481, '#aa0000'], [765, 481, '#aa0000'],
    [650, 586, '#aa0000'], [658, 577, '#aa0000'], [708, 592, '#aa0000'], [720, 582, '#aa0000'], [768, 586, '#aa0000'], [785, 591, '#aa0000'], [796, 618, '#7b4444'], [792, 760, '#7b4444'],
    [724, 695, '#007b44'], [759, 693, '#007b44'], [653, 772, '#007b44'], [643, 793, '#007b44'], [708, 787, '#007b44'], [703, 805, '#007b44'], [762, 797, '#007b44'], [790, 805, '#7b7700'],
    [719, 905, '#7b7700'], [753, 901, '#7b7700'], [650, 964, '#7b7700'], [638, 994, '#7b7700'], [705, 983, '#7b7700'], [693, 1014, '#7b7700'], [752, 999, '#7b7700'], [772, 1003, '#7b7700'], [788, 944, '#aa7700'],
    [714, 1075, '#aa0077'], [747, 1070, '#aa0077'], [648, 1121, '#aa0077'], [700, 1178, '#aa0077'], [748, 1166, '#aa0077'], [770, 1170, '#aa0077'],
    [940, 222, '#4400aa'], [936, 375, '#4400aa'], [932, 426, '#7b4444'], [925, 582, '#7b4444'], [924, 632, '#aa0077'], [918, 783, '#aa0077'], [916, 830, '#4400aa'], [911, 978, '#4400aa'],
    [1064, 246, '#0000e0'], [1058, 378, '#0000e0'], [1056, 424, '#7b7700'], [1050, 558, '#7b7700'], [1047, 602, '#0000e0'], [1041, 735, '#0000e0'], [1037, 777, '#7b0000'], [1034, 908, '#7b0000'],
    [1203, 236, '#7b7700'], [1195, 377, '#7b7700'], [1191, 424, '#7b0000'], [1182, 568, '#7b0000'], [1180, 615, '#aa0000'], [1172, 755, '#aa0000'], [1169, 800, '#007b44'], [1162, 937, '#007b44'],
    [167, 875, '#7b4444'], [170, 1036, '#7b4444'], [268, 911, '#aa0077'], [269, 1085, '#aa0077'], [447, 916, '#007b44'], [445, 1057, '#007b44'], [447, 889, '#007b44'],
];

const rings = [
    [606, 1168], [622, 1172], [642, 1172], [626, 1160], [690, 1153], [704, 1162], [722, 1156], [704, 1148], [675, 1198], [692, 1204], [705, 1198], [692, 1190],
    [690, 1224], [706, 1228], [720, 1224], [704, 1215], [606, 1241], [622, 1250], [640, 1242], [626, 1233], [672, 1273], [687, 1284], [707, 1274], [690, 1264],
    [755, 1252], [770, 1259], [792, 1255], [772, 1246], [755, 1182], [770, 1188], [792, 1182], [774, 1172],
];

const mullions = [
    [50, 115, 70, 1200], [120, 125, 130, 1190], [175, 125, 183, 1180], [290, 130, 294, 1160], [405, 130, 410, 1140], [503, 140, 490, 1120], [600, 150, 585, 1100],
    [700, 155, 680, 1085], [790, 158, 762, 1070], [868, 165, 838, 1055], [950, 170, 915, 1040], [1025, 175, 985, 1030], [1095, 180, 1060, 1015], [1172, 188, 1130, 1005],
    [1240, 192, 1195, 990], [1300, 195, 1255, 985], [1365, 200, 1315, 975], [1430, 205, 1378, 965], [1490, 210, 1438, 950], [1540, 215, 1485, 940], [1590, 218, 1550, 930],
];

const darkPosts = [
    [70, 175, 78, 860, 14], [160, 165, 163, 850, 12], [266, 140, 268, 850, 20], [386, 125, 388, 1140, 9], [396, 125, 397, 1140, 5], [773, 165, 750, 1060, 14], [943, 175, 915, 960, 8],
    [1090, 180, 1050, 1015, 13], [1357, 200, 1308, 980, 13], [1428, 205, 1380, 900, 8], [1585, 215, 1528, 920, 15],
];

// lines running from the left edge to the far corner, spread evenly between two heights
type Band = { x2: number; left: [number, number]; right: [number, number]; n: number };

const bands: Band[] = [
    { x2: 1740, left: [55, 118], right: [186, 208], n: 9 },
    { x2: 1590, left: [125, 190], right: [205, 240], n: 6 },
    { x2: 1560, left: [588, 640], right: [545, 572], n: 9 },
    { x2: 1740, left: [645, 720], right: [560, 604], n: 8 },
    { x2: 1550, left: [830, 900], right: [730, 790], n: 9 },
    { x2: 1545, left: [950, 1055], right: [765, 860], n: 9 },
    { x2: 1690, left: [1225, 1320], right: [915, 968], n: 5 },
];

const bandPath = ({ x2, left, right, n }: Band, part: number) => {
    const lines = [];
    for (let i = part; i < n; i += 3) {
        const t = i / (n - 1);
        lines.push(`M0 ${left[0] + t * (left[1] - left[0])}L${x2} ${right[0] + t * (right[1] - right[0])}`);
    }
    return lines.join('');
};

const floors = [[245, 370], [445, 565], [640, 780], [860, 965]];

const interior = floors.map(([top, bottom], f) => {
    const lines = [];
    for (let x = 845; x < 1190; x += 22) {
        const lift = ((x * 7) % 40) - 10;
        lines.push(`M${x - f * 9} ${top + lift - (x - 845) / 12}V${bottom - (x - 845) / 9 + 20}`);
    }
    return lines.join('');
});

const Building = () => (
    <svg viewBox="9 0 1791 1380" className="mt-[153px] ml-[514px] h-[460px] w-[597px]" fill="none" role="img" aria-label="Modello 3D">
        <g fill="#c9cdcb">
            <path d="M0 50 840 120 1760 190V212L1600 212 0 150Z" fill="#e0e3e2" />
            <path d="M0 95 900 160 1600 195 1590 240 0 200Z" fill="#b6bab8" />
            <path d="M290 160 1210 180 1150 1010 290 1160Z" fill="#d5d8d7" />
            <path d="M620 165 1190 185 1170 760 600 840Z" fill="#b9bfbc" />
            <path d="M870 250 1050 240 1040 790 860 820Z" fill="#a5aca8" opacity=".75" />
            <path d="M300 165 385 170V850L300 860Z" fill="#d0d4d2" />
            <path d="M340 140H380V1130H340ZM390 160 460 165V1120L390 1135Z" fill="#b0b5b2" opacity=".6" />
            <path d="M0 378H1590V430H0Z" fill="#dcdfde" />
            <path d="M0 585 300 620 1560 545 1740 565 1750 600 900 640 0 720Z" fill="#bcc0be" />
            <path d="M0 830 1560 740V930L0 1210Z" fill="#c4c8c6" opacity=".8" />
            <path d="M0 960 1560 860 1700 920 1695 970 0 1325Z" fill="#d6d9d8" opacity=".85" />
            <path d="M320 1040 1325 990 1320 1160 570 1348 320 1215Z" fill="#b9bdbb" opacity=".6" />
            <path d="M570 1110 1330 980 1320 1160 570 1348Z" fill="#cfd2d1" opacity=".5" />
            <path d="M1290 520H1670V555H1290Z" fill="#e2e5e4" />
            <path d="M1585 590 1745 570 1748 600 1715 925 1560 900Z" fill="#ccd0ce" />
            <path d="M1210 240 1290 240 1270 376H1200ZM1195 430 1275 430 1262 570H1185ZM1185 620 1262 630 1250 760H1172Z" fill="#e1ebed" />
        </g>
        <path
            d="M10 220H60V370H10ZM82 220H155V370H82ZM185 215H255V370H185ZM10 440H66V580H10ZM86 440H150V580H86ZM185 435H255V610H185ZM10 740 66 733V812L10 820ZM86 730 155 725V812L86 820ZM185 720 255 712V820L185 850ZM1370 250H1415V375H1370ZM1440 248H1570V375H1440ZM1365 430H1405V515H1365ZM1430 430H1565V515H1430Z"
            fill="#fff"
        />
        {bands.map((band, i) => (
            <g key={i} strokeWidth="3">
                <path d={bandPath(band, 0)} stroke="#8b8f8d" />
                <path d={bandPath(band, 1)} stroke="#f4f5f5" strokeWidth="5" />
                <path d={bandPath(band, 2)} stroke="#5a5a5a" strokeDasharray="80 14 36 10" />
            </g>
        ))}
        <g stroke="#8d9290" strokeWidth="3">
            <path d="M420 215H840M660 280 870 270M640 450H1150M640 350V800M690 260V590M830 300V570M870 440V800M985 220V780M1150 200V900M1010 260V740M930 640V780M620 215V540M665 485H700V590M665 695H700V780M460 150V1225" />
            <path d="M1100 860 1500 760M1100 800 1550 720M1180 740 1540 700M1310 730 1540 770M1290 560 1560 590M1240 870 1690 930M640 830 1060 770M300 870 620 960 900 900" />
            <path d="M150 830 400 930M130 180 380 150M560 830 740 900M1340 1020 1690 940M320 1215 690 1100 1320 1160" />
        </g>
        <g stroke="#8e9492" strokeWidth="5" opacity=".75">
            {interior.map((d, i) => <path key={i} d={d} />)}
        </g>
        <g stroke="#333" strokeWidth="7" strokeDasharray="70 26 30 12">
            <path d="M120 108 1600 200M20 135 390 140M0 182 160 190M100 595 290 640M0 622 280 606M150 835 400 860M620 170 900 185M1100 840 1500 770M1290 545 1560 572" opacity=".75" />
        </g>
        <g stroke="#333" strokeWidth="3">
            <path d="M20 60 860 130" strokeDasharray="60 30" />
            <path d="M0 383H1590M0 950 840 835 1550 762M0 682 420 650 1560 565" strokeWidth="6" />
            <path d="M0 1240 1320 985 1690 918M0 1280 1310 1020M0 1325 380 1250 1310 1060 1695 970V940M0 1260 1310 1000M0 428H620" />
            <path d="M320 1215 570 1348 1320 1160 1330 1000M570 1348 575 1110M320 1215V1040M1290 990V1155L1320 1160" />
            <path d="M1240 865 1690 920M1300 850 1540 930M1560 590 1740 565M1560 600 1670 560M1740 575 1700 920" strokeDasharray="40 8" />
        </g>
        <g stroke="#333">
            {darkPosts.map(([x1, y1, x2, y2, w], i) => (
                <g key={i}>
                    <path d={`M${x1} ${y1}L${x2} ${y2}`} strokeWidth={w} />
                    <path d={`M${x1} ${y1}L${x2} ${y2}`} stroke="#aaa" strokeWidth="2" strokeDasharray="24 12" />
                </g>
            ))}
            <path d="M1610 595 1585 890M1690 590 1655 905" stroke="#666" strokeWidth="14" strokeDasharray="18 3" />
            <path d="M1528 600 1508 880" stroke="#8d9290" strokeWidth="24" strokeDasharray="14 4" />
            <path d="M310 390V420M1250 830V870M1280 390V420" strokeWidth="14" stroke="#555" />
        </g>
        <g stroke="#fff" strokeWidth="5">
            {mullions.map(([x1, y1, x2, y2], i) => (
                <g key={i}>
                    <path d={`M${x1} ${y1}L${x2} ${y2}`} />
                    <path d={`M${x1 + 12} ${y1}L${x2 + 10} ${y2}`} strokeWidth="3" opacity=".8" />
                </g>
            ))}
            <path d="M0 110 860 165 1590 210M0 265H620L1590 300M0 392H1590M0 520 1590 480M0 660 420 632 1700 560M0 700 1560 610M0 750 900 745 1560 670M0 965 840 850 1560 750M0 1020 850 920 1550 850M0 1215 580 1110 1560 930M860 870 1720 890" />
            <path d="M80 1160 1300 985 1540 930" strokeDasharray="18 6" strokeWidth="4" />
            <path d="M1748 600C1740 570 1720 572 1690 575M1750 600 1720 900C1715 930 1700 925 1690 925" strokeWidth="6" stroke="#eef0ef" />
        </g>
        <g stroke="#f4f5f5" strokeWidth="6" opacity=".8">
            <path d="M420 400 540 310H620M420 450 600 600M440 430 600 580M420 660 600 770M440 640 590 740M420 860 600 980M640 480 700 470V590M430 590 600 560M480 930 600 1010" />
            <path d="M440 470 590 600 440 560M440 690 590 760M450 800 590 740" strokeDasharray="10 6" />
        </g>
        <path d="M360 325H368M362 335H366M358 552H368M362 562H366M358 772H368" stroke="#14a414" strokeWidth="4" />
        <g stroke="#4fae62" opacity=".45">
            {softEdges.map(([x, y1, y2, w], i) => <path key={i} d={`M${x} ${y1}V${y2}`} strokeWidth={w} />)}
        </g>
        <path d={blueBeams[0]} stroke="#5050d8" strokeWidth="6" opacity=".7" />
        <path d={blueBeams[1]} stroke="#4f8fa8" strokeWidth="8" />
        <path d={blueBeams[1]} stroke="#0000e8" strokeWidth="3" strokeDasharray="22 6" />
        {beams.map((d) => <path key={d} d={d} stroke="#14c414" strokeWidth="6" />)}
        <g stroke="#00c000">
            {edges.map(([x, y1, y2, w], i) => (
                <g key={i}>
                    <path d={`M${x} ${y1}L${x - (x > 780 ? 5 : 0)} ${y2}`} strokeWidth={w} />
                    {w > 19 && x > 900 && <path d={`M${x} ${y1}L${x - 5} ${y2}`} stroke="#5fa85f" strokeWidth="4" />}
                </g>
            ))}
        </g>
        {pads.map(([x, y, c], i) => <ellipse key={i} cx={x} cy={y} rx={x < 790 && x > 600 ? 19 : 23} ry="15" fill={c} />)}
        {pads.map(([x, y], i) => x < 780 && x > 700 && <circle key={i} cx={x - 3} cy={y} r="4" stroke="#d9b8b8" strokeWidth="2" />)}
        {rings.map(([x, y], i) => <circle key={i} cx={x} cy={y} r="9" stroke="#4400aa" strokeWidth="7" />)}
        {nodes.map(([x, y], i) => <ellipse key={i} cx={x} cy={y} rx="13" ry="11" fill="#000" />)}
    </svg>
);

/* ---------- settings dialog ---------- */

type BarProps = { title: string; icon: React.ReactNode; open?: boolean; dim?: boolean };

const Bar = ({ title, icon, open, dim }: BarProps) => (
    <h3>
        <button
            disabled={dim}
            className={clsx('flex h-[22px] w-full items-center rounded-sm bg-[#d6d6d6] pl-[5px] text-[11px] font-bold', dim ? 'text-[#7b7b7b]' : 'text-black')}
        >
            <span className={clsx('flex w-4 items-center', dim ? 'pl-[2px] text-[#999]' : open ? 'text-[#333]' : 'pl-[2px] text-[#333]')}>{open ? <Down /> : <Right />}</span>
            <span className={clsx('w-[25px]', dim ? 'text-[#999]' : 'text-[#222c33]')}>{icon}</span>
            {title}
        </button>
    </h3>
);

const Field = ({ label, value, disabled }: { label: string; value: string; disabled?: boolean }) => (
    <input
        aria-label={label}
        defaultValue={value}
        disabled={disabled}
        className={clsx('h-[22px] w-[88px] border px-[2px] text-[11px]', disabled ? 'border-[#e6e6e6] bg-[#f0f0f0] text-[#777]' : 'border-[#e6e6e6] border-b-[#808080] bg-white')}
    />
);

const Select = ({ id, label, options }: { id: string; label: string; options: string[] }) => (
    <div>
        <label htmlFor={id} className="block h-[21px] text-[11px] leading-[20px]">{label}</label>
        <div className="grid w-[205px] items-center">
            <select id={id} className="col-start-1 row-start-1 h-[23px] w-full appearance-none rounded-[1px] border border-[#8a8a8a] bg-white px-[6px] text-[11px]">
                {options.map((option) => <option key={option}>{option}</option>)}
            </select>
            <Icon w={12} h={7} className="pointer-events-none col-start-1 row-start-1 mr-2 justify-self-end text-[#555]"><path d="M1 1 6 6 11 1" /></Icon>
        </div>
    </div>
);

const Choice = ({ label, on, children }: ToolProps) => (
    <button aria-label={label} className={clsx('flex h-6 w-[30px] items-center justify-center rounded-sm', on && 'border border-[#99d1ff] bg-[#cce8ff]')}>
        {children}
    </button>
);

const Geometry = () => (
    <div className="flex h-[298px] text-[#222c33]">
        <div className="flex w-[205px] flex-col pt-[5px] text-black">
            <Select id="top-link" label="Collegamento Superiore:" options={['Non Collegato', '3. Roof']} />
            <div className="flex justify-between pt-[39px] pb-[2px]">
                <Icon w={90} h={92} className="text-[#222c33]">
                    <path d="M0 76H75L88 90H14Z" fill="#c8c8c8" stroke="none" />
                    <path d="M22.500 1.500H62L66.500 5.500V84.500H27L22.500 81Z" fill="#d9d9d9" />
                    <path d="M27.500 5.500H66.500V84.500H27.500ZM22 2 27 6" fill="#fdfdfd" />
                    <path d="M66 5.500H76M66 84.500H76" strokeDasharray="2 1" />
                    <path d="M75.500 6V92" />
                    <path d="M73 9H78L75.500 5ZM73 81H78L75.500 85ZM73 89H78L75.500 86Z" fill="currentColor" stroke="none" />
                </Icon>
                <div className="flex flex-col gap-[23px] pt-7">
                    <Field label="Altezza muro" value="3250" />
                    <Field label="Quota di base" value="0" />
                </div>
            </div>
            <Select id="home-story" label="Piano ospite:" options={['2. 2nd Floor', '1. 1st Floor', '0. Ground Floor']} />
            <div className="mt-[18px] flex items-center justify-end gap-[6px] text-[11px] leading-[15px]">
                a Zero di Progetto <MiniArrow label="Riferimento quota" />
            </div>
            <div className="mt-[3px] flex justify-between">
                <Icon w={90} h={26} className="text-[#222c33]">
                    <path d="M0 12H75L88 25H14Z" fill="#c8c8c8" stroke="none" />
                    <path d="M22 15H62L66 20H27Z" fill="#8f9498" stroke="none" />
                    <path d="M75.500 0V16M66 19.500H76" strokeDasharray="3 1" />
                    <path d="M73 15H78L75.500 20Z" fill="currentColor" stroke="none" />
                    <path d="M75.500 7V19" />
                </Icon>
                <Field label="Quota progetto" value="8600" />
            </div>
        </div>
        <div className="mt-6 mr-[14px] ml-[15px] h-[264px] w-px bg-[#8f8f8f]" />
        <div className="flex-1 pt-[25px]">
            <div className="flex">
                <Choice label="Base"><Basic /></Choice>
                <Choice label="Composto" on><Composite /></Choice>
                <Choice label="Profilo"><Profile /></Choice>
            </div>
            <WhiteButton className="mt-5 h-6 w-full gap-[6px] pr-1 pl-[6px] text-[11px] text-black">
                <Brick /> <span className="flex-1 text-left">SH - Double Gypsum Plaster Board</span> <Right />
            </WhiteButton>
            <hr className="mt-[6px] border-[#9a9a9a]" />
            <div className="flex items-center pt-[15px]">
                <Choice label="Rettilineo" on><Icon><path d="M0.500 4.500H17.500V13.500H0.500Z" /><path d="M0 5H18" strokeWidth="2" /><Hatch x={1} y={5} w={16} h={9} /></Icon></Choice>
                <Choice label="Trapezio"><Icon><path d="M0.500 5V9L17.500 14V5" /><path d="M0 5H18" strokeWidth="2" /><path d="M4 10 9 5M8 11 13 6M12 13 17 8M1 9 5 5" strokeWidth="0.800" /></Icon></Choice>
                <Choice label="Poligonale"><Icon w={20} h={18} className="text-[#a3a7aa]"><path d="M1 14V8L5 3.500H14L11 8 19 14ZM2 12 10 4M5 14 12 6M9 14 13 10" /></Icon></Choice>
                <span className="mr-[11px] ml-auto"><Thickness /></span>
                <Field label="Spessore muro" value="20" disabled />
            </div>
            <div className="flex items-center pt-[21px]">
                <Choice label="Verticale" on><Icon><path d="M0 16.500H18M5.500 16V1.500H12.500V16" /></Icon></Choice>
                <Choice label="Inclinato"><Icon><path d="M0 16.500H18M3 16 8 1.500H15L10 16" /></Icon></Choice>
                <Choice label="Doppia inclinazione"><Icon><path d="M0 16.500H18M3 16 6 1.500H12L15 16" /></Icon></Choice>
                <span className="mr-2 ml-auto text-[#a3a7aa]">
                    <Icon w={22} h={20}><path d="M1 18 6 3.500H12L8 18ZM12 3 14 0" /><path d="M9 18.500H22" strokeDasharray="2 1" /><text x="13" y="15" className="fill-current stroke-none text-[12px]">α</text></Icon>
                </span>
                <Field label="Angolo" value="90,00°" disabled />
            </div>
            <hr className="mt-[51px] border-[#9a9a9a]" />
            <p className="pt-[11px] text-[11px] leading-[15px] text-black">Linea di Riferimento:</p>
            <div className="flex items-center pt-[3px]">
                <WhiteButton label="Linea di riferimento" className="h-[23px] w-[35px] justify-between px-[3px]"><WallFace /><Right /></WhiteButton>
                <WhiteButton label="Capovolgi muro" className="ml-[5px] h-[23px] w-7 justify-center"><FlipSide /></WhiteButton>
                <span className="mr-[7px] ml-auto">
                    <Icon w={28} h={20}><path d="M0 5.500H16M0 9.500H16V18.500H0" /><path d="M17 5.500H24M17 9.500H24" strokeDasharray="2 1" /><path d="M0 9.500H16" strokeWidth="2" /><Hatch x={0} y={5} w={16} h={13} /><path d="M25 0V5M23 3 25 5 27 3M25 17V10M23 12 25 10 27 12" /></Icon>
                </span>
                <Field label="Offset" value="0" />
            </div>
        </div>
    </div>
);

type Row = { head?: string; name?: string; value?: string; linked?: boolean; selected?: boolean; crane?: boolean };

const rows: Row[] = [
    { head: 'RISTRUTTURAZIONE' },
    { name: 'Stato Ristrutturazione', value: 'Nuovo', crane: true },
    { name: 'Mostra sul Filtro della Ristr...', value: 'Tutti i Filtri Rilevanti' },
    { head: 'GENERAL RATINGS' },
    { name: 'Fire Resistance Rating', value: '<Non definito>', linked: true, selected: true },
    { name: 'Combustible', value: '<Non definito>', linked: true },
    { name: 'Thermal Transmittance', value: '<Non definito>', linked: true },
    { name: 'Sound Transmission Class', value: '<Non definito>', linked: true },
    { name: 'Strenght Value', value: '', linked: true },
    { head: 'PRODUCT INFO' },
];

const Properties = () => (
    <div className="pt-[5px] text-[11px] text-black">
        <div className="flex">
            <div className="w-[454px]">
                <p className="h-5 pl-[60px] leading-[20px] font-bold">CLASSIFICAZIONI</p>
                <div className="flex h-[19px] items-center bg-[#0078d7] text-white">
                    <label className="flex flex-1 items-center">
                        <span className="ml-[34px] grid h-3 w-3">
                            <input type="checkbox" defaultChecked className="peer col-start-1 row-start-1 h-3 w-3 appearance-none border border-white" />
                            <svg viewBox="0 0 12 12" className="pointer-events-none invisible col-start-1 row-start-1 peer-checked:visible" fill="none" stroke="#fff" strokeWidth="1.500" aria-hidden="true"><path d="M2.500 6 5 8.500 9.500 3" /></svg>
                        </span>
                        <span className="ml-4 w-[149px] whitespace-nowrap">ARCHICAD Classification - ...</span>
                        <span>Partitioning Wall</span>
                    </label>
                    <WhiteButton label="Scegli classificazione" className="mr-[2px] h-[17px] w-[17px] justify-center text-[#222]"><Right /></WhiteButton>
                </div>
                <div className="h-[7px] bg-white" />
            </div>
            <div className="ml-[9px] flex flex-col gap-[16px] pt-2 text-[#a0a0a0]">
                <Down className="h-[7px] w-[10px] rotate-180" />
                <Down className="h-[7px] w-[10px]" />
            </div>
        </div>
        <div className="mt-[5px] h-[5px] bg-[#f7f7f7]" />
        <div className="flex pt-[5px]">
            <table className="w-[454px] table-fixed border-collapse">
                <colgroup><col className="w-[60px]" /><col className="w-[149px]" /><col /></colgroup>
                <tbody>
                    {rows.map((row) =>
                        row.head ? (
                            <tr key={row.head} className="h-5 bg-[#f0f0f0]">
                                <td className="pl-[6px]"><Down className="text-[#333]" /></td>
                                <th colSpan={2} className="text-left leading-[16px] font-bold">{row.head}</th>
                            </tr>
                        ) : (
                            <tr
                                key={row.name}
                                className={clsx('h-5 border-b', row.selected ? 'border-dotted border-black bg-[#0078d7] text-white' : 'border-[#ececec] bg-white')}
                            >
                                <td className={clsx(row.selected ? 'pl-[21px]' : 'pl-[33px]')}>
                                    {row.selected ? (
                                        <WhiteButton label="Collegamento valore" className="h-[17px] w-[38px] justify-between pr-[3px] pl-[8px] text-[#222c33]"><Link /><Right /></WhiteButton>
                                    ) : (
                                        row.linked && <span className="text-[#222c33]"><Link /></span>
                                    )}
                                </td>
                                <td className="pl-[2px] leading-[16px] whitespace-nowrap">{row.name}</td>
                                <td className="pl-[2px] leading-[16px]">
                                    <span className="flex items-center justify-between pr-[21px]">
                                        {row.value}
                                        {row.crane && <Icon w={18} h={18} className="text-[#222c33]"><path d="M0.500 0.500H14.500V2.500H0.500ZM3.500 3V15.500M6.500 3V15.500M0.500 15.500H8V17.500H0.500ZM13.500 3V7M11.500 7.500H15.500V9.500H11.500ZM9.500 15.500H17.500V17.500H9.500ZM13.500 15V17" /></Icon>}
                                    </span>
                                </td>
                            </tr>
                        )
                    )}
                </tbody>
            </table>
            <div className="ml-2 mt-[35px] h-[26px] w-[11px] bg-[#868686]" />
        </div>
    </div>
);

const SettingsDialog = () => (
    <div role="dialog" aria-label="Impostazioni Selezione Muro" className="absolute top-[21px] left-0 w-[514px] overflow-hidden rounded-xl border-2 border-[#bdbfc2] bg-[#f0f0f0] shadow-lg">
        <header className="flex h-[43px] items-center bg-[#eef3fa] pr-[26px] pb-[5px] pl-[14px] text-[#1b1b1b]">
            <Logo size={19} />
            <h2 className="flex-1 pl-[7px] text-[17px]">Impostazioni Selezione Muro</h2>
            <button aria-label="Aiuto" className="mr-[58px] text-[18px]">?</button>
            <button aria-label="Chiudi"><Icon w={16} h={16}><path d="M1 1 15 15M15 1 1 15" strokeWidth="1.500" /></Icon></button>
        </header>
        <div className="px-[15px] pt-[10px]">
            <div className="flex items-center justify-between pb-[11px]">
                <WhiteButton label="Preferiti" className="h-[23px] w-[38px] justify-between px-[5px] text-[#222c33]">
                    <Icon w={18} h={18}><path d="M9 1 11.500 6.500 17 7 13 11 14 17 9 14 4 17 5 11 1 7 6.500 6.500Z" /></Icon>
                    <Right />
                </WhiteButton>
                <p className="text-[11px] text-black">Selezionati: 104 Editabile: 104</p>
            </div>
            <Bar open title="GEOMETRIA E POSIZIONAMENTO" icon={<Icon><path d="M1.500 0.500H9L11.500 2.500V11.500H3L1.500 10ZM3.500 2.500H11M3.500 3V12M1 13.500 4 16.500H13L10 13.500ZM15.500 2V11M13.500 4 15.500 1 17.500 4M13.500 9 15.500 12 17.500 9" /></Icon>} />
            <Geometry />
            <div className="space-y-[5px]">
                <Bar dim title="MODIFICATORI OFFSET PROFILO" icon={<Profile />} />
                <Bar title="PIANTA E SEZIONE" icon={<SectionL />} />
                <Bar title="MODELLO" icon={<Icon><path d="M1 8 6 3 8 4 11 1 14 3 17 5V13L14 16 1 14ZM1 8 14 9 17 5M14 9V16M6 3 13 5" /></Icon>} />
                <Bar dim title="PARAMETRI ANALITICI STRUTTURALI" icon={<Icon><path d="M1.500 16V4L5 1.500H16L13 4.500H1M1 8.500H8M6.500 4V12M13.500 4V7M9.500 7.500H16.500V16.500H9.500ZM11 10.500H15M11 12.500H15M11 14.500H15M16 1V6" /></Icon>} />
                <Bar open title="CLASSIFICAZIONE E PROPRIETÀ" icon={<Icon><path d="M3.500 2.500H14.500V16.500H3.500ZM5.500 5.500H10M5.500 7.500H12.500M5.500 10.500H10M5.500 12.500H12.500" /></Icon>} />
            </div>
            <Properties />
            <hr className="mt-[10px] border-[#9a9a9a]" />
            <footer className="flex items-center pt-3 pb-[10px] text-[11px] text-black">
                <Icon w={26} h={18} className="text-[#222c33]"><path d="M6 1.500H25L20 9.500H1ZM1.500 9V11.500H20L25 4M1.500 12V14.500H20L25 7M1.500 15V17.500H20L25 10M8 3.500H13L12 6.500H8M16 6 18 3M19 6 21 3" /></Icon>
                <WhiteButton className="ml-[10px] h-[22px] w-[238px] gap-1 px-1"><Eye /><span className="flex-1 pl-px text-left">Finish - Wall</span><Right /></WhiteButton>
                <button className="ml-auto h-[22px] w-[88px] rounded border border-[#cfcfcf] bg-[#fdfdfd]">Annulla</button>
                <button className="ml-3 h-[22px] w-[88px] rounded border border-[#0078d7] bg-[#fdfdfd]">OK</button>
            </footer>
        </div>
        <Icon w={12} h={12} className="absolute right-[3px] bottom-[2px] text-[#b5b5b5]">
            <path d="M9 0H12V3H9ZM9 4H12V7H9ZM9 8H12V11H9ZM5 4H8V7H5ZM5 8H8V11H5ZM1 8H4V11H1Z" fill="currentColor" stroke="none" />
        </Icon>
    </div>
);

const Tabs = () => (
    <nav className="flex h-[22px] items-stretch bg-[#d9d9d9] text-[11px] text-black">
        <button aria-label="Panoramica schede" className="flex w-[27px] items-center justify-center border-r border-[#bdbdbd] pl-px text-[#222c33]">
            <Icon w={18} h={14}><path d="M0.500 0.500H7.500V5.500H0.500ZM10.500 0.500H17.500V5.500H10.500ZM0.500 8.500H7.500V13.500H0.500ZM10.500 8.500H17.500V13.500H10.500Z" /></Icon>
        </button>
        <button className="flex w-[300px] items-center gap-[2px] pl-1">
            <Icon w={18} h={16}><path d="M0.500 0.500H7.500V6.500H17.500V15.500H0.500ZM3.500 1V4L7 1" fill="#eef3fa" stroke={BLUE} /></Icon>
            (!) 0. Ground Floor [0. Ground Floor]
        </button>
        <div className="flex w-[299px] items-center gap-[3px] bg-white pl-[5px]">
            <Icon w={16} h={16}><path d="M1 2 10.500 0.500 15 3V14L10.500 15.500 1 14ZM10.500 1V16" stroke={BLUE} /></Icon>
            <button className="flex-1 text-left whitespace-nowrap">Structure - Load-Bearing Elements - Transparent...</button>
            <button aria-label="Chiudi scheda" className="mr-2"><Icon w={8} h={8}><path d="M1 1 7 7M7 1 1 7" strokeWidth="1.500" /></Icon></button>
        </div>
    </nav>
);

const menus = ['Archivio', 'Edita', 'Visualizza', 'Design', 'Documento', 'Opzioni', 'Teamwork', 'Finestre', 'Aiuto'];

export default function App() {
    return (
        <div className="flex min-h-screen flex-col overflow-hidden bg-[#f0f0f0] font-['Open_Sans','Noto_Sans',sans-serif]">
            <header className="flex h-[23px] items-center gap-[6px] bg-[#f3f3f3] pl-[5px] text-[12px] text-[#858585]">
                <Logo size={13} />
                <h1>GRAPHISOFT_Archicad_Sample_Project-S-Office - Archicad 27</h1>
            </header>
            <nav className="flex h-[18px] items-center gap-[11px] bg-white pt-px pl-2 text-[12px] text-[#5f5f5f]">
                {menus.map((menu) => <button key={menu}>{menu}</button>)}
            </nav>
            <Toolbar />
            <InfoBox />
            <div className="flex flex-1">
                <Toolbox />
                <Results />
                <main className="relative flex min-w-0 flex-1 flex-col bg-white">
                    <Tabs />
                    <div className="ml-[611px] flex h-[17px] w-[31px] items-center rounded-b bg-[#f0f0f0] px-[2px] pt-[2px]">
                        <svg viewBox="0 0 27 1" className="h-px w-full" aria-hidden="true"><path d="M0 .5H27" stroke="#f5821f" strokeDasharray="5 2" /></svg>
                    </div>
                    <Building />
                    <div className="mt-auto ml-[611px] h-1 w-[31px] rounded-t bg-[#ececec]" />
                    <SettingsDialog />
                </main>
            </div>
        </div>
    );
}
